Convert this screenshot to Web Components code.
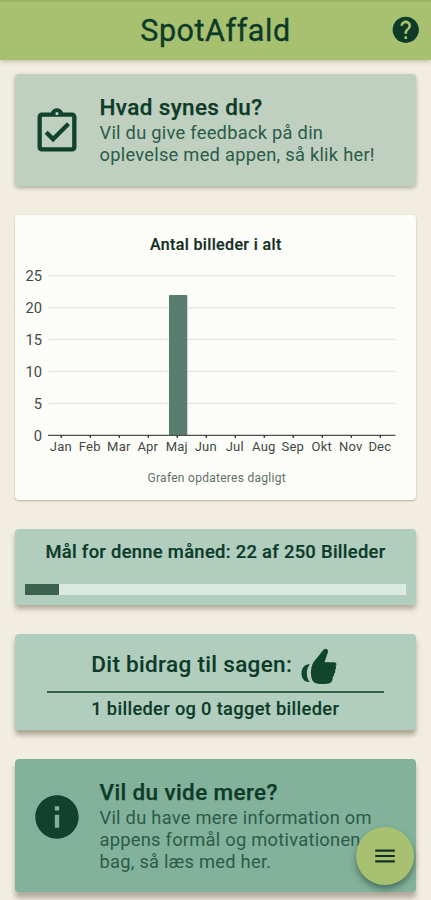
<!DOCTYPE html>
<html lang="da">
<head>
<meta charset="utf-8">
<title>SpotAffald</title>
<style>
  html, body {
    margin: 0;
    height: 100%;
    overflow: hidden;
    background: #f1eee0;
    color: #0d3b28;
    font-family: Roboto, "Liberation Sans", sans-serif;
  }
</style>
</head>
<body>
<spot-app>
  <app-header slot="header">SpotAffald</app-header>
  <info-card icon="feedback" style="--bg: #bfd0c1; --height: 112px">
    <span slot="title">Hvad synes du?</span>
    Vil du give feedback på din<br>oplevelse med appen, så klik her!
  </info-card>
  <month-chart heading="Antal billeder i alt" note="Grafen opdateres dagligt" values="0,0,0,0,22,0,0,0,0,0,0,0"></month-chart>
  <goal-card value="22" max="250"></goal-card>
  <contribution-card>
    <span slot="title">Dit bidrag til sagen:</span>
    1 billeder og 0 tagget billeder
  </contribution-card>
  <info-card icon="info" style="--bg: #83b29c; --height: 133px; --shade: 0 6px 5px rgba(90, 80, 60, .42)">
    <span slot="title">Vil du vide mere?</span>
    Vil du have mere information om<br>appens formål og motivationen<br>bag, så læs med her.
  </info-card>
  <menu-button slot="fab"></menu-button>
</spot-app>

<script>
const ICONS = {
  feedback: '<path d="M19 3h-4.18C14.4 1.84 13.3 1 12 1s-2.4.84-2.82 2H5c-1.1 0-2 .9-2 2v14c0 1.1.9 2 2 2h14c1.1 0 2-.9 2-2V5c0-1.1-.9-2-2-2zm-7-.25c.41 0 .75.34.75.75s-.34.75-.75.75-.75-.34-.75-.75.34-.75.75-.75zM19 19H5V5h14v14zM18 8.9l-1.4-1.4-6.4 6.4-2.5-2.5-1.4 1.4 3.9 3.9z"/>',
  info: '<path d="M12 2C6.48 2 2 6.48 2 12s4.48 10 10 10 10-4.48 10-10S17.52 2 12 2zm1 15h-2v-6h2v6zm0-8h-2V7h2v2z"/>',
  help: '<path d="M12 2C6.48 2 2 6.48 2 12s4.48 10 10 10 10-4.48 10-10S17.52 2 12 2zm1 17h-2v-2h2v2zm2.07-7.75l-.9.92C13.45 12.9 13 13.5 13 15h-2v-.5c0-1.1.45-2.1 1.17-2.83l1.24-1.26c.37-.36.59-.86.59-1.41 0-1.1-.9-2-2-2s-2 .9-2 2H8c0-2.21 1.79-4 4-4s4 1.79 4 4c0 .88-.36 1.68-.93 2.25z"/>',
  menu: '<path d="M3 18h18v-2H3v2zm0-5h18v-2H3v2zm0-7v2h18V6H3z"/>'
};

const icon = (name, size) =>
  `<svg width="${size}" height="${size}" viewBox="0 0 24 24" fill="currentColor">${ICONS[name]}</svg>`;

class SpotApp extends HTMLElement {
  constructor() {
    super();
    this.attachShadow({ mode: "open" }).innerHTML = `
      <style>
        :host {
          display: block;
        }
        main {
          display: flex;
          flex-direction: column;
          gap: 29px;
          padding: 14px 15px 8px 14.5px;
        }
      </style>
      <slot name="header"></slot>
      <main><slot></slot></main>
      <slot name="fab"></slot>
    `;
  }
}
customElements.define("spot-app", SpotApp);

class AppHeader extends HTMLElement {
  constructor() {
    super();
    this.attachShadow({ mode: "open" }).innerHTML = `
      <style>
        :host {
          display: grid;
          grid-template-columns: 50px 1fr 50px;
          align-items: center;
          height: 60px;
          box-sizing: border-box;
          border-top: 2px solid #9bb365;
          background: #a8c171;
          box-shadow: 0 1px 5px rgba(70, 70, 40, .35);
        }
        h1 {
          grid-column: 2;
          margin: 0;
          font-size: 30.5px;
          font-weight: 400;
          line-height: 58px;
          text-align: center;
          letter-spacing: .55px;
          -webkit-text-stroke: .35px currentColor;
        }
        svg {
          display: block;
          margin: 0 0 2px 9px;
        }
      </style>
      <h1><slot></slot></h1>
      ${icon("help", 31.5)}
    `;
  }
}
customElements.define("app-header", AppHeader);

class InfoCard extends HTMLElement {
  constructor() {
    super();
    this.attachShadow({ mode: "open" });
  }

  connectedCallback() {
    this.shadowRoot.innerHTML = `
      <style>
        :host {
          display: flex;
          box-sizing: border-box;
          height: var(--height);
          border-radius: 4px;
          background: var(--bg);
          box-shadow: var(--shade, 0 2px 4px rgba(90, 80, 60, .42));
        }
        .icon {
          display: flex;
          align-items: center;
          justify-content: center;
          width: 85px;
          height: 116.5px;
          color: #10422d;
        }
        .text {
          padding-top: 19px;
        }
        h2 {
          margin: 0;
          font-size: 22.5px;
          font-weight: 500;
          line-height: 29px;
          letter-spacing: .37px;
          -webkit-text-stroke: .25px currentColor;
        }
        p {
          margin: 0;
          font-size: 18.3px;
          line-height: 22.2px;
          letter-spacing: .26px;
          color: #2c5b48;
          white-space: nowrap;
        }
      </style>
      <div class="icon">${icon(this.getAttribute("icon"), 52)}</div>
      <div class="text">
        <h2><slot name="title"></slot></h2>
        <p><slot></slot></p>
      </div>
    `;
  }
}
customElements.define("info-card", InfoCard);

class MonthChart extends HTMLElement {
  constructor() {
    super();
    this.attachShadow({ mode: "open" });
  }

  connectedCallback() {
    const months = ["Jan", "Feb", "Mar", "Apr", "Maj", "Jun", "Jul", "Aug", "Sep", "Okt", "Nov", "Dec"];
    const values = this.getAttribute("values").split(",").map(Number);
    const base = 180.3;
    const unit = 6.38;
    const x = i => 46.3 + i * 29;

    const grid = [0, 5, 10, 15, 20, 25].map(v => `
      ${v ? `<path d="M33.5 ${base - v * unit}H380.5" stroke="#e6e8e4" stroke-width="1.5"/>` : ""}
      <text class="y" x="27" y="${base - v * unit + 5.6}">${v}</text>`).join("");
    const bars = values.map((v, i) => v
      ? `<rect x="${x(i) - 8.3}" y="${base - v * unit}" width="18.3" height="${v * unit}" rx="1" fill="#597d70"/>`
      : "").join("");
    const ticks = months.map((m, i) => `
      <path d="M${x(i)} ${base}v2.5" stroke="#303433" stroke-width="1.5"/>
      <text class="x" x="${x(i) - 0.5}" y="${base + 15.5}">${m}</text>`).join("");

    this.shadowRoot.innerHTML = `
      <style>
        :host {
          display: flex;
          flex-direction: column;
          height: 285px;
          border-radius: 4px;
          background: #fcfdf8;
          box-shadow: 0 1px 2px rgba(90, 80, 60, .4);
        }
        h2 {
          margin: 20px 0 0 1px;
          font-size: 16px;
          font-weight: 500;
          line-height: 20px;
          letter-spacing: .36px;
          text-align: center;
          color: #142f25;
          -webkit-text-stroke: .2px currentColor;
        }
        svg {
          display: block;
        }
        text {
          fill: #414846;
        }
        .x {
          font-size: 13px;
          text-anchor: middle;
          letter-spacing: .2px;
        }
        .y {
          font-size: 14.7px;
          text-anchor: end;
        }
        p {
          margin: 5px 0 0 3px;
          font-size: 12px;
          line-height: 16px;
          letter-spacing: .28px;
          text-align: center;
          color: #5e706a;
        }
      </style>
      <h2>${this.getAttribute("heading")}</h2>
      <svg width="401" height="210" viewBox="0 0 401 210">
        ${grid}${bars}
        <path d="M33 ${base}H380.5" stroke="#4c5150" stroke-width="1.3"/>
        ${ticks}
      </svg>
      <p>${this.getAttribute("note")}</p>
    `;
  }
}
customElements.define("month-chart", MonthChart);

class GoalCard extends HTMLElement {
  constructor() {
    super();
    this.attachShadow({ mode: "open" });
  }

  connectedCallback() {
    const value = Number(this.getAttribute("value"));
    const max = Number(this.getAttribute("max"));
    this.shadowRoot.innerHTML = `
      <style>
        :host {
          display: block;
          box-sizing: border-box;
          height: 76px;
          padding: 11px 10px 0 10.5px;
          border-radius: 4px;
          background: #b0cdbe;
          box-shadow: 0 4px 5px rgba(90, 80, 60, .42);
        }
        h2 {
          margin: 0 0 21px;
          font-size: 18.4px;
          font-weight: 500;
          line-height: 23px;
          letter-spacing: .29px;
          text-align: center;
          -webkit-text-stroke: .2px currentColor;
        }
        .track {
          height: 11px;
          background: #dce9e1;
        }
        .fill {
          width: ${value / max * 100}%;
          height: 100%;
          background: #3d614f;
        }
      </style>
      <h2>Mål for denne måned: ${value} af ${max} Billeder</h2>
      <div class="track"><div class="fill"></div></div>
    `;
  }
}
customElements.define("goal-card", GoalCard);

class ContributionCard extends HTMLElement {
  constructor() {
    super();
    this.attachShadow({ mode: "open" }).innerHTML = `
      <style>
        :host {
          display: flex;
          flex-direction: column;
          box-sizing: border-box;
          height: 96px;
          padding: 0 32.5px;
          border-radius: 4px;
          background: #b0cdbe;
          box-shadow: 0 5px 5px rgba(90, 80, 60, .45);
        }
        .head {
          display: flex;
          align-items: center;
          justify-content: center;
          gap: 9px;
          box-sizing: border-box;
          height: 59px;
          padding-right: 2px;
          border-bottom: 2px solid #2f6048;
        }
        h2 {
          margin: 3px 0 0;
          font-size: 22.5px;
          font-weight: 500;
          letter-spacing: .32px;
          -webkit-text-stroke: .1px currentColor;
        }
        svg {
          margin-top: 6px;
        }
        p {
          margin: 4px 0 0;
          font-size: 18.3px;
          font-weight: 500;
          line-height: 23px;
          letter-spacing: .32px;
          text-align: center;
          -webkit-text-stroke: .1px currentColor;
        }
      </style>
      <div class="head">
        <h2><slot name="title"></slot></h2>
        <svg width="36" height="38" viewBox="0 0 36 38" fill="#12452e">
          <path d="M12.4 15.2 22.5 2.8c1.4-2.2 5.2-.9 4.5 2.1l-3.5 10.3h9.6c2.7 0 3 3 1.4 3.9 1 1.3.8 3-.6 3.8.7 1.5.3 3-.9 3.9.3 1.4-.2 2.4-1.1 3-.1 4.1-1.6 6.6-5.3 6.9-7.6.6-11.9.2-13.9-1.8-4-3.4-3.4-14.900-.3-19.7z"/>
          <path d="M8.9 17.3C4 16.700.5 20.9.5 26.3c0 5.9 3.7 9.2 8.2 8.700-3.8-4.8-3.9-12.600.2-17.700z"/>
        </svg>
      </div>
      <p><slot></slot></p>
    `;
  }
}
customElements.define("contribution-card", ContributionCard);

class MenuButton extends HTMLElement {
  constructor() {
    super();
    this.attachShadow({ mode: "open" }).innerHTML = `
      <style>
        :host {
          position: fixed;
          right: 17px;
          bottom: 15px;
        }
        button {
          display: grid;
          place-items: center;
          width: 58.5px;
          height: 58.5px;
          padding: 0;
          border: 0;
          border-radius: 50%;
          background: #a8c171;
          color: #102f22;
          box-shadow: 0 4px 6px rgba(20, 50, 35, .5);
        }
      </style>
      <button aria-label="Menu">${icon("menu", 26)}</button>
    `;
  }
}
customElements.define("menu-button", MenuButton);
</script>
</body>
</html>
